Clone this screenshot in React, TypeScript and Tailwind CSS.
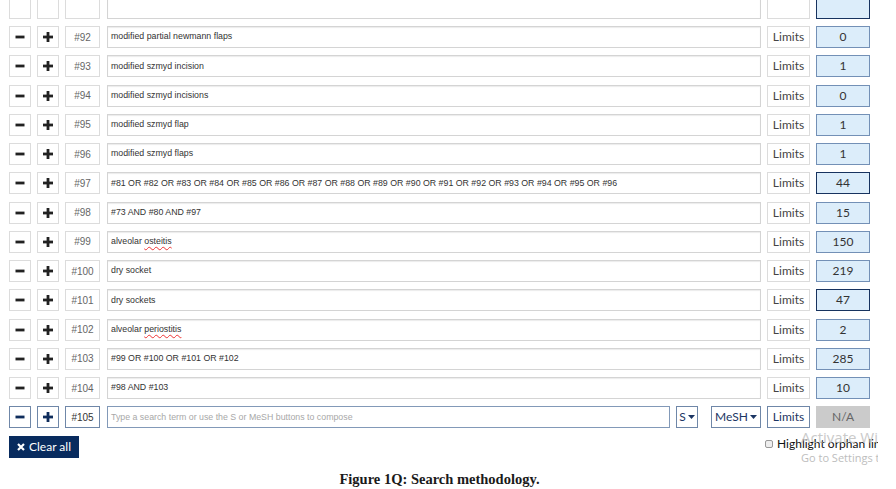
import React from "react";

type Row = { n: number; text: React.ReactNode; count: string; dark?: boolean };

const wavy = "underline decoration-wavy decoration-[#e33] decoration-1 underline-offset-2";

const rows: Row[] = [
  { n: 92, text: "modified partial newmann flaps", count: "0" },
  { n: 93, text: "modified szmyd incision", count: "1" },
  { n: 94, text: "modified szmyd incisions", count: "0" },
  { n: 95, text: "modified szmyd flap", count: "1" },
  { n: 96, text: "modified szmyd flaps", count: "1" },
  {
    n: 97,
    text: "#81 OR #82 OR #83 OR #84 OR #85 OR #86 OR #87 OR #88 OR #89 OR #90 OR #91 OR #92 OR #93 OR #94 OR #95 OR #96",
    count: "44",
    dark: true,
  },
  { n: 98, text: "#73 AND #80 AND #97", count: "15" },
  {
    n: 99,
    text: (
      <span>
        alveolar <span className={wavy}>osteitis</span>
      </span>
    ),
    count: "150",
  },
  { n: 100, text: "dry socket", count: "219" },
  { n: 101, text: "dry sockets", count: "47", dark: true },
  {
    n: 102,
    text: (
      <span>
        alveolar <span className={wavy}>periostitis</span>
      </span>
    ),
    count: "2",
  },
  { n: 103, text: "#99 OR #100 OR #101 OR #102", count: "285" },
  { n: 104, text: "#98 AND #103", count: "10" },
];

const lato = { fontFamily: "Lato, 'Open Sans', sans-serif" };
const arial = { fontFamily: "'Liberation Sans', Arial, sans-serif" };

function Minus({ color }: { color: string }) {
  return (
    <svg width="10" height="10" viewBox="0 0 10 10">
      <rect x="0.5" y="3.6" width="9" height="2.8" fill={color} />
    </svg>
  );
}
function Plus({ color }: { color: string }) {
  return (
    <svg width="10" height="10" viewBox="0 0 10 10">
      <rect x="0" y="3.6" width="10" height="2.8" fill={color} />
      <rect x="3.6" y="0" width="2.8" height="10" fill={color} />
    </svg>
  );
}
function Caret() {
  return (
    <svg width="7" height="4" viewBox="0 0 7 4" className="ml-[2px]">
      <path d="M0 0 L7 0 L3.5 4 Z" fill="#1b3563" />
    </svg>
  );
}

function RowLine({ row, empty }: { row: Row; empty?: boolean }) {
  return (
    <div className="flex h-[22px] items-stretch">
      <div className="flex w-[22px] items-center justify-center border border-[#dcdcdc] bg-white">
        {!empty && <Minus color="#222" />}
      </div>
      <div className="ml-[6px] flex w-[22px] items-center justify-center border border-[#dcdcdc] bg-white">
        {!empty && <Plus color="#222" />}
      </div>
      <div
        className="ml-[6px] flex w-[35px] items-center justify-center border border-[#dcdcdc] bg-white text-[10px] text-[#666]"
        style={arial}
      >
        {!empty && `#${row.n}`}
      </div>
      <div
        className="ml-[7px] flex w-[654px] items-center whitespace-nowrap border border-[#d4d4d4] bg-white pl-[3px] text-[8.8px] text-[#333] shadow-[inset_0_1px_1px_rgba(0,0,0,0.08)]"
        style={arial}
      >
        {!empty && row.text}
      </div>
      <div
        className="ml-[6px] flex w-[43px] items-center justify-center border border-[#dcdcdc] bg-white text-[12px] text-[#444]"
        style={lato}
      >
        {!empty && "Limits"}
      </div>
      <div
        className={`ml-[6px] flex w-[54px] items-center justify-center border bg-[#dcedfa] text-[12px] text-[#333] ${
          row.dark ? "border-[#17335f]" : "border-[#7390b6]"
        }`}
        style={lato}
      >
        {!empty && row.count}
      </div>
    </div>
  );
}

export default function App() {
  return (
    <div className="relative h-[489px] w-[896px] overflow-hidden bg-white">
      <div className="-mt-[3.25px] flex flex-col gap-[7.25px] pl-[9px]">
        <RowLine row={{ n: 91, text: "", count: "", dark: true }} empty />
        {rows.map((r) => (
          <RowLine key={r.n} row={r} />
        ))}
        {/* new row */}
        <div className="flex h-[22px] items-stretch">
          <div className="flex w-[22px] items-center justify-center border border-[#6f87a8] bg-white">
            <Minus color="#0f2d5c" />
          </div>
          <div className="ml-[6px] flex w-[22px] items-center justify-center border border-[#6f87a8] bg-white">
            <Plus color="#0f2d5c" />
          </div>
          <div
            className="ml-[6px] flex w-[35px] items-center justify-center border border-[#6f87a8] bg-white text-[10px] text-[#333]"
            style={arial}
          >
            #105
          </div>
          <div
            className="ml-[7px] flex w-[563px] items-center whitespace-nowrap border border-[#8299b8] bg-white pl-[3px] text-[8.8px] text-[#a8a8a8]"
            style={arial}
          >
            Type a search term or use the S or MeSH buttons to compose
          </div>
          <div
            className="ml-[6px] flex w-[22px] items-center justify-center border border-[#6f87a8] bg-white text-[12px] text-[#1b3563]"
            style={lato}
          >
            S<Caret />
          </div>
          <div
            className="ml-[13px] flex w-[50px] items-center justify-center border border-[#6f87a8] bg-white text-[12px] text-[#1b3563]"
            style={lato}
          >
            MeSH<Caret />
          </div>
          <div
            className="ml-[6px] flex w-[43px] items-center justify-center border border-[#6f87a8] bg-white text-[12px] text-[#1b3563]"
            style={lato}
          >
            Limits
          </div>
          <div
            className="ml-[6px] flex w-[54px] items-center justify-center bg-[#cbcbcb] text-[12px] text-[#666]"
            style={lato}
          >
            N/A
          </div>
        </div>
      </div>

      <div className="mt-[8px] flex h-[22px] items-start pl-[9px]">
        <div
          className="flex h-[22px] w-[70px] items-center justify-center gap-[4px] bg-[#082b5e] text-[12px] text-white"
          style={lato}
        >
          <svg width="8" height="8" viewBox="0 0 8 8">
            <path d="M1 1 L7 7 M7 1 L1 7" stroke="white" strokeWidth="2.2" />
          </svg>
          Clear all
        </div>
        <div
          className="ml-[686px] mt-0 flex w-[113px] items-center overflow-hidden whitespace-nowrap text-[12px] leading-[16px] text-[#111]"
          style={lato}
        >
          <span className="mr-[4px] inline-block h-[8px] w-[8px] shrink-0 rounded-[2px] border border-[#999] bg-[#eee]" />
          Highlight orphan lines
        </div>
      </div>

      <div
        className="mt-[13px] pr-[17px] text-center text-[14.5px] font-bold leading-[16px] text-[#1a1a1a]"
        style={{ fontFamily: "'Liberation Serif', 'DejaVu Serif', serif" }}
      >
        Figure 1Q: Search methodology.
      </div>

      {/* Windows watermark overlay */}
      <div
        className="pointer-events-none absolute left-[801px] top-[427px] w-[77px] overflow-hidden whitespace-nowrap text-[#bdbdbd]"
        style={{ fontFamily: "'Open Sans', sans-serif" }}
      >
        <div className="text-[15px] leading-[20px] opacity-80">Activate Windows</div>
        <div className="mt-[4px] text-[11px] leading-[14px]">Go to Settings to activate Windows.</div>
      </div>
    </div>
  );
}
